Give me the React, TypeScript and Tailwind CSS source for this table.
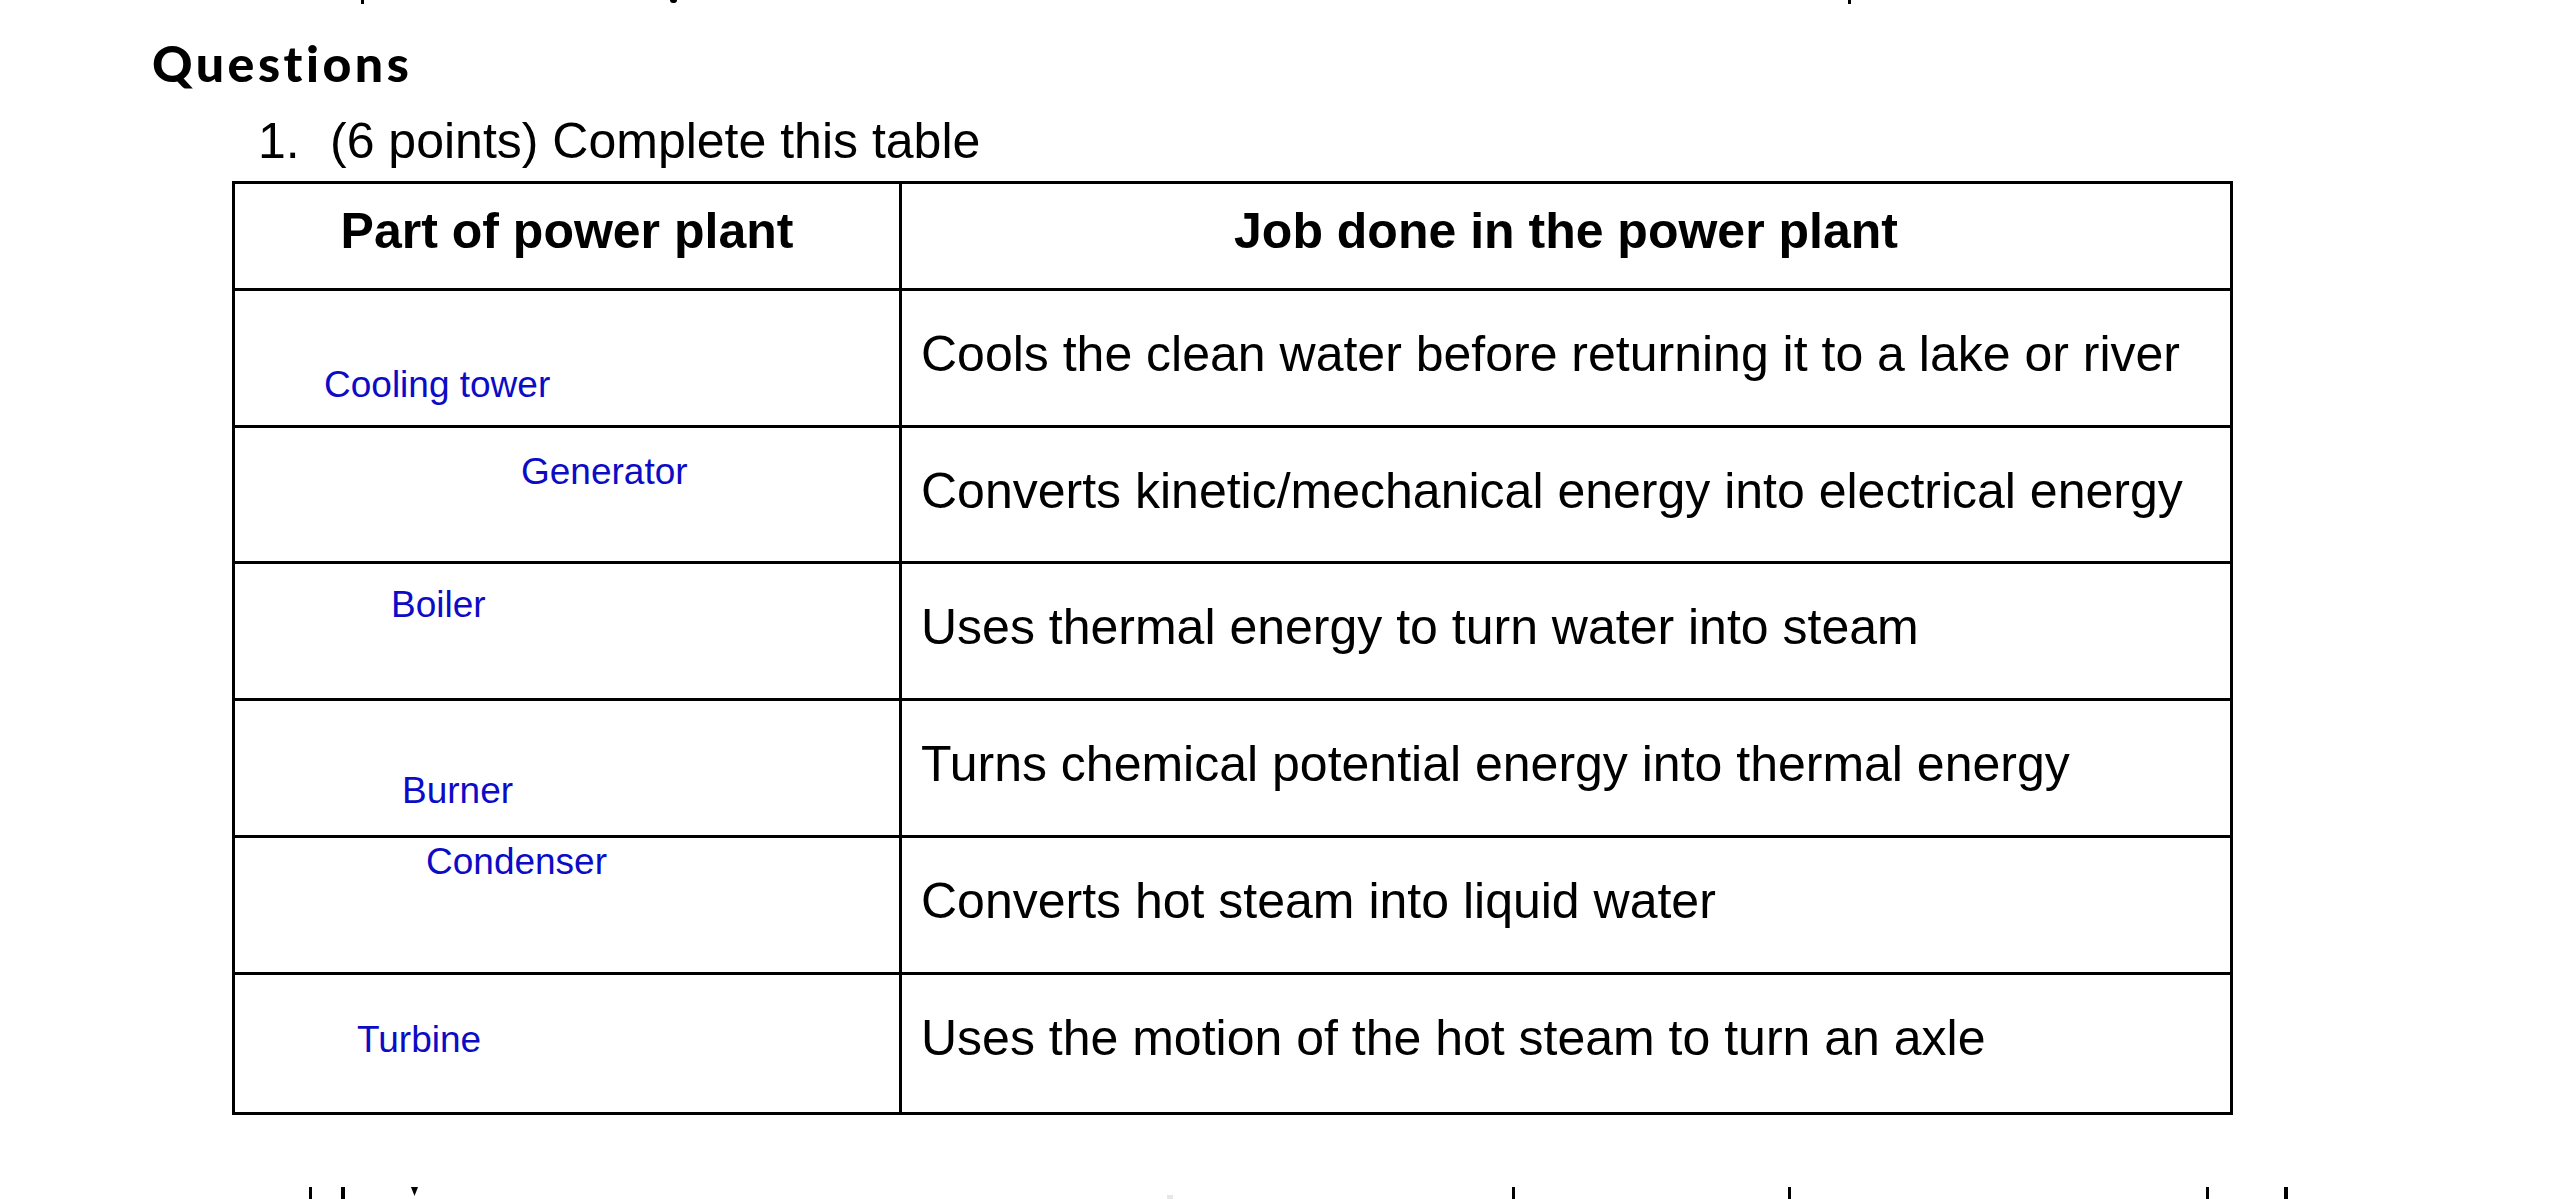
import React from "react";

const rows = [
  { part: "Cooling tower", pl: "pl-[89px]", pt: "pt-[75px]", job: "Cools the clean water before returning it to a lake or river", h: "h-[137px]" },
  { part: "Generator", pl: "pl-[286px]", pt: "pt-[25px]", job: "Converts kinetic/mechanical energy into electrical energy", h: "h-[136px]" },
  { part: "Boiler", pl: "pl-[156px]", pt: "pt-[22px]", job: "Uses thermal energy to turn water into steam", h: "h-[137px]" },
  { part: "Burner", pl: "pl-[167px]", pt: "pt-[71px]", job: "Turns chemical potential energy into thermal energy", h: "h-[137px]" },
  { part: "Condenser", pl: "pl-[191px]", pt: "pt-[5px]", job: "Converts hot steam into liquid water", h: "h-[137px]" },
  { part: "Turbine", pl: "pl-[122px]", pt: "pt-[46px]", job: "Uses the motion of the hot steam to turn an axle", h: "h-[137px]" },
];

export default function App() {
  return (
    <div className="w-[2549px] h-[1199px] bg-white overflow-hidden text-black font-['Liberation_Sans',Arial,sans-serif]">
      {/* descender fragments from the line above */}
      <div className="flex h-[4px] items-start">
        <span className="ml-[361px] w-[3px] h-[4px] bg-black" />
        <span className="ml-[306px] w-[7px] h-[3px] bg-black rounded-b-full" />
        <span className="ml-[1171px] w-[3px] h-[4px] bg-black" />
      </div>

      <div className="mt-[34px] pl-[152px] h-[50px] leading-none text-[50px] font-black tracking-[3.5px] font-['Lato','Liberation_Sans',sans-serif]">
        Questions
      </div>

      <div className="mt-[28px] pl-[258px] flex text-[50px] leading-none h-[50px]">
        <span className="w-[72px]">1.</span>
        <span>(6 points) Complete this table</span>
      </div>

      <div className="mt-[15px] ml-[232px] w-[2001px] border-[3px] border-black flex flex-col">
        <div className="flex h-[107px] border-b-[3px] border-black text-[50px] leading-none font-bold">
          <div className="w-[667px] shrink-0 border-r-[3px] border-black pt-[22px] text-center">Part of power plant</div>
          <div className="flex-1 pt-[22px] text-center">Job done in the power plant</div>
        </div>
        {rows.map((r, i) => (
          <div
            key={r.part}
            className={`flex ${r.h} ${i < rows.length - 1 ? "border-b-[3px] border-black" : ""}`}
          >
            <div className={`w-[667px] shrink-0 border-r-[3px] border-black ${r.pl} ${r.pt} text-[37px] leading-none text-[#0c0cc6]`}>
              {r.part}
            </div>
            <div className="flex-1 pl-[19px] pt-[38px] text-[50px] leading-none whitespace-nowrap">{r.job}</div>
          </div>
        ))}
      </div>

      {/* ascender fragments from the line below */}
      <div className="mt-[72px] flex h-[12px] items-start">
        <span className="ml-[309px] w-[3px] h-[12px] bg-black" />
        <span className="ml-[29px] w-[4px] h-[12px] bg-black" />
        <span className="ml-[66px] w-[7px] h-[9px] bg-black [clip-path:polygon(0_0,100%_0,50%_100%)]" />
        <span className="ml-[749px] w-[6px] h-[4px] mt-[8px] bg-gray-200" />
        <span className="ml-[339px] w-[3px] h-[12px] bg-black" />
        <span className="ml-[273px] w-[3px] h-[12px] bg-black" />
        <span className="ml-[415px] w-[3px] h-[12px] bg-black" />
        <span className="ml-[75px] w-[4px] h-[12px] bg-black" />
      </div>
    </div>
  );
}
